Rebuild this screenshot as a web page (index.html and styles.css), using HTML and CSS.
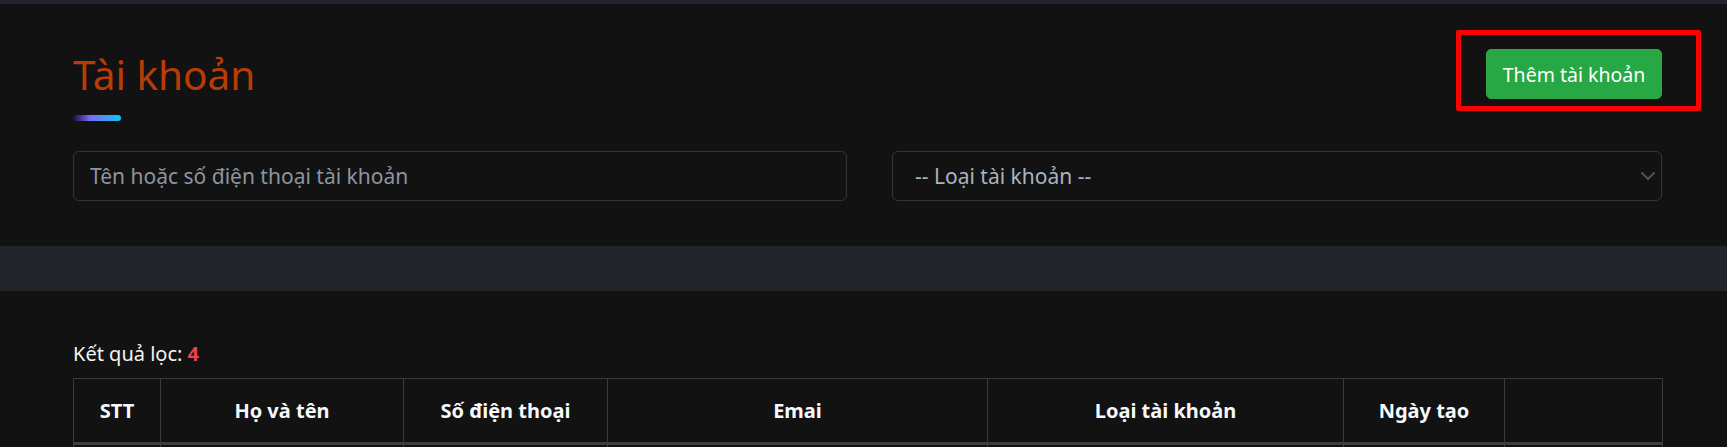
FILE: index.html
```html
<!DOCTYPE html>
<html lang="vi">
<head>
<meta charset="utf-8">
<title>Tài khoản</title>
<link rel="stylesheet" href="styles.css">
</head>
<body>
<div class="topstrip"></div>
<section class="head">
  <div class="title-row">
    <div class="title-block">
      <h1 class="title">Tài khoản</h1>
      <div class="title-bar"></div>
    </div>
    <div class="btn-wrap">
      <button class="btn-add">Thêm tài khoản</button>
      <div class="annot"></div>
    </div>
  </div>
  <div class="filters">
    <input class="field" type="text" placeholder="Tên hoặc số điện thoại tài khoản">
    <div class="select">
      <span>-- Loại tài khoản --</span>
      <svg class="chev" width="14" height="8" viewBox="0 0 14 8"><path d="M1 1l6 6 6-6" fill="none" stroke="#4d535c" stroke-width="2" stroke-linecap="round" stroke-linejoin="round"/></svg>
    </div>
  </div>
</section>
<div class="band"></div>
<section class="results">
  <p class="count">Kết quả lọc: <b>4</b></p>
  <table class="grid">
    <colgroup>
      <col style="width:87px"><col style="width:243px"><col style="width:204px"><col style="width:380px"><col style="width:356px"><col style="width:161px"><col style="width:158px">
    </colgroup>
    <thead>
      <tr><th>STT</th><th>Họ và tên</th><th>Số điện thoại</th><th>Emai</th><th>Loại tài khoản</th><th>Ngày tạo</th><th></th></tr>
    </thead>
    <tbody>
      <tr><td></td><td></td><td></td><td></td><td></td><td></td><td></td></tr>
    </tbody>
  </table>
</section>
</body>
</html>
```
FILE: styles.css
```css
html, body {
  margin: 0;
  background: #121212;
  color: #f1f1f1;
  font-family: "Noto Sans", "Open Sans", sans-serif;
  overflow: hidden;
}
.topstrip {
  height: 4px;
  background: #22252b;
}
.head {
  padding: 0 65px 0 73px;
  height: 242px;
}
.title-row {
  display: flex;
  justify-content: space-between;
  align-items: flex-start;
}
.title-block {
  padding-top: 44px;
}
.title {
  margin: 0;
  font-size: 40.5px;
  font-weight: 400;
  line-height: 54px;
  color: #b83c06;
}
.title-bar {
  margin-top: 13px;
  width: 48px;
  height: 6px;
  border-radius: 3px;
  background: linear-gradient(90deg, #120f3a 0%, #7a6af5 35%, #4b95f5 65%, #0ec6f6 100%);
}
.btn-wrap {
  position: relative;
  margin-top: 45px;
}
.btn-add {
  display: block;
  height: 50px;
  width: 176px;
  border: 1px solid #2aa84a;
  border-radius: 5px;
  background: #28a745;
  color: #fff;
  font-family: inherit;
  font-size: 19.5px;
  padding: 0;
}
.annot {
  position: absolute;
  left: -30px;
  top: -19px;
  width: 235px;
  height: 71px;
  border: 5px solid #ff0000;
  border-radius: 2px;
  pointer-events: none;
}
.filters {
  margin-top: 30px;
  display: flex;
  gap: 45px;
}
.field, .select {
  flex: 1;
  box-sizing: border-box;
  height: 50px;
  border: 1px solid #353535;
  border-radius: 6px;
  background: #121212;
  font-family: inherit;
  font-size: 21px;
  color: #a9b4c0;
}
.field {
  padding: 0 16px;
  outline: none;
}
.field::placeholder {
  color: #8d959e;
}
.select {
  display: flex;
  align-items: center;
  justify-content: space-between;
  padding: 0 6px 0 22px;
}
.band {
  height: 45px;
  background: #212429;
}
.results {
  padding: 0 65px 0 73px;
}
.count {
  margin: 50px 0 0;
  font-size: 20px;
  line-height: 26px;
  color: #f4f4f4;
}
.count b {
  color: #ea4250;
}
.grid {
  margin-top: 11px;
  width: 100%;
  border-collapse: collapse;
  table-layout: fixed;
}
.grid th, .grid td {
  border: 1px solid #3a3a3a;
  text-align: center;
}
.grid th {
  height: 63px;
  padding: 0;
  font-size: 20px;
  font-weight: 700;
  color: #f6f8fb;
  border-bottom: 3px solid #3e3e3e;
}
.grid td {
  height: 50px;
}
```
